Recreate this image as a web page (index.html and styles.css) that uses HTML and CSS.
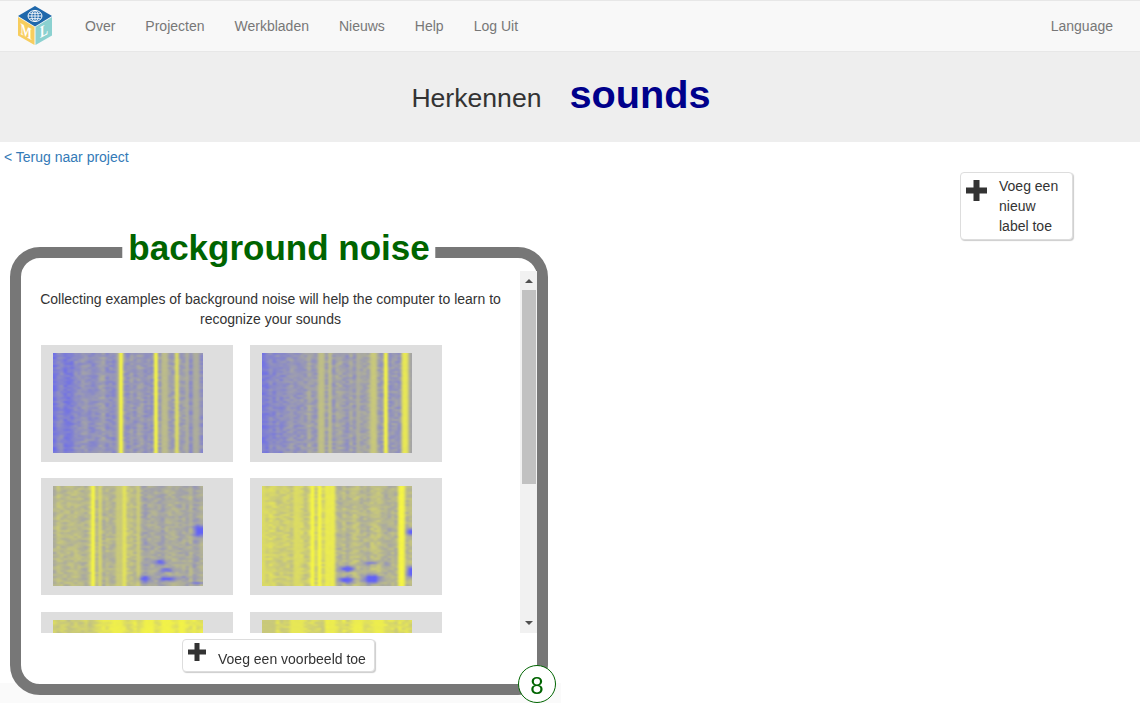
FILE: index.html
```html
<!DOCTYPE html>
<html lang="nl">
<head>
<meta charset="utf-8">
<title>Herkennen sounds</title>
<link rel="stylesheet" href="styles.css">
</head>
<body>
<nav class="navbar">
  <a class="brand" href="#">
    <svg class="logo" width="36" height="40" viewBox="0 0 36 40">
      <polygon points="18,0 35,10 18,20.5 1,10" fill="#1f68ab"/>
      <polygon points="1,11 17.5,21 17.5,39 1,29.5" fill="#f7cd5e"/>
      <polygon points="35,11 18.5,21 18.5,39 35,29.5" fill="#8bd1d0"/>
      <g fill="none" stroke="#fff" stroke-width=".9">
        <ellipse cx="18" cy="10" rx="7" ry="5.6"/>
        <ellipse cx="18" cy="10" rx="3.2" ry="5.6"/>
        <path d="M11 10h14M12.3 7.3h11.4M12.3 12.7h11.4M18 4.4v11.2"/>
      </g>
      <text class="logo-m" transform="matrix(.8 .42 0 1.1 3.5 28)">M</text>
      <text class="logo-l" transform="matrix(.8 -.42 0 1.1 23 32)">L</text>
    </svg>
  </a>
  <ul class="nav-links">
    <li><a href="#">Over</a></li>
    <li><a href="#">Projecten</a></li>
    <li><a href="#">Werkbladen</a></li>
    <li><a href="#">Nieuws</a></li>
    <li><a href="#">Help</a></li>
    <li><a href="#">Log Uit</a></li>
  </ul>
  <a class="language" href="#">Language</a>
</nav>

<header class="band">
  <span class="band-label">Herkennen</span>
  <span class="band-name">sounds</span>
</header>

<a class="back" href="#">&lt; Terug naar project</a>

<main class="workspace">
  <div class="label-col">
    <section class="card">
      <h2 class="card-title">background noise</h2>
      <div class="scroll-row">
        <div class="scroller">
          <p class="intro">Collecting examples of background noise will help the computer to learn to recognize your sounds</p>
          <div class="tiles">
            <div class="tile"><canvas width="150" height="100" data-spec="0"></canvas></div>
            <div class="tile"><canvas width="150" height="100" data-spec="1"></canvas></div>
            <div class="tile"><canvas width="150" height="100" data-spec="2"></canvas></div>
            <div class="tile"><canvas width="150" height="100" data-spec="3"></canvas></div>
            <div class="tile"><canvas width="150" height="100" data-spec="4"></canvas></div>
            <div class="tile"><canvas width="150" height="100" data-spec="5"></canvas></div>
            <div class="tile"><canvas width="150" height="100" data-spec="4"></canvas></div>
            <div class="tile"><canvas width="150" height="100" data-spec="5"></canvas></div>
          </div>
        </div>
        <div class="scrollbar">
          <span class="arrow arrow-up"></span>
          <span class="thumb"></span>
          <span class="arrow arrow-down"></span>
        </div>
      </div>
      <button class="btn btn-example" type="button">
        <svg class="plus plus-small" viewBox="0 0 18 18"><path d="M6.5 0h5v6.5H18v5h-6.5V18h-5v-6.5H0v-5h6.5z"/></svg>
        <span>Voeg een voorbeeld toe</span>
      </button>
      <span class="count">8</span>
    </section>
  </div>
  <button class="btn btn-label" type="button">
    <svg class="plus plus-large" viewBox="0 0 21 21"><path d="M7.5 0h6v7.5H21v6h-7.5V21h-6v-7.5H0v-6h7.5z"/></svg>
    <span class="btn-label-text">Voeg een nieuw label toe</span>
  </button>
</main>
<script src="script.js"></script>
</body>
</html>
```
FILE: styles.css
```css
* { box-sizing: border-box; }
html, body { height: 100%; overflow: hidden; }
body {
  margin: 0;
  background: #fff;
  color: #333;
  font: 14px/20px "Liberation Sans", Arial, sans-serif;
}
a { text-decoration: none; }

.navbar {
  display: flex;
  align-items: center;
  height: 52px;
  background: #f8f8f8;
  border-top: 1px solid #e7e7e7;
  border-bottom: 1px solid #e7e7e7;
}
.brand { display: block; margin-left: 17px; width: 53px; height: 40px; margin-top: -1px; }
.logo { display: block; }
.logo-m, .logo-l { font: bold 15px "Liberation Serif", serif; fill: #fff; }
.nav-links { display: flex; list-style: none; margin: 0; padding: 0; }
.nav-links a { display: block; padding: 0 15px; color: #777; }
.language { margin-left: auto; margin-right: 27px; color: #777; }

.band {
  display: flex;
  justify-content: center;
  align-items: flex-start;
  gap: 28px;
  height: 90px;
  padding: 17px 18px 0 0;
  background: #eee;
}
.band-label { margin-top: 4px; font-size: 26.6px; line-height: 50px; color: #333; }
.band-name { font-size: 39.7px; line-height: 50px; font-weight: bold; color: #00008b; }

.back { display: block; margin: 5px 0 0 4px; color: #337ab7; }

.workspace { display: flex; align-items: flex-start; }
.label-col {
  width: 561px;
  margin-top: 80px;
  padding: 0 13px 8px 10px;
  background: linear-gradient(to bottom, #fff 436px, #fafafa 436px);
}
.card {
  position: relative;
  display: flex;
  flex-direction: column;
  align-items: center;
  width: 538px;
  height: 448px;
  padding-top: 13px;
  background: #fff;
  border: 11px solid #777;
  border-radius: 30px;
}
.card-title {
  position: absolute;
  top: -30px;
  left: 50%;
  transform: translateX(-50%);
  margin: 0;
  padding: 0 6px;
  background: #fff;
  color: #006400;
  font-size: 35px;
  line-height: 40px;
  font-weight: bold;
  white-space: nowrap;
}
.scroll-row { display: flex; flex: none; width: 516px; height: 362px; }
.scroller { flex: 1; overflow: hidden; padding-top: 18px; }
.scrollbar {
  display: flex;
  flex-direction: column;
  align-items: center;
  flex: none;
  width: 17px;
  padding: 8px 0;
  background: #f1f1f1;
}
.arrow { flex: none; width: 0; height: 0; border-left: 4px solid transparent; border-right: 4px solid transparent; }
.arrow-up { border-bottom: 4px solid #505050; }
.arrow-down { border-top: 4px solid #505050; margin-top: auto; }
.thumb { flex: none; width: 14px; height: 194px; margin-top: 7px; background: #c1c1c1; }
.intro { margin: 0 0 15.6px; text-align: center; }
.tiles {
  display: grid;
  grid-template-columns: 192px 192px;
  column-gap: 17px;
  row-gap: 16.5px;
  padding-left: 20px;
}
.tile { height: 117px; padding: 8px 12px; background: #dedede; }
.tile canvas { display: block; width: 150px; height: 100px; }

.btn {
  display: flex;
  background: #fff;
  border: 1px solid #ddd;
  border-radius: 4px;
  box-shadow: 1px 1px 1px #ccc;
  color: #333;
  font: inherit;
  text-align: left;
  cursor: pointer;
}
.plus { display: block; flex: none; fill: #333; }
.btn-example {
  flex: none;
  align-items: flex-start;
  margin: 6px 1px 0 0;
  width: 193px;
  height: 33px;
  padding: 3px 0 0 5px;
}
.plus-small { width: 18px; height: 18px; }
.btn-example span { margin: 6px 0 0 12px; white-space: nowrap; }
.count {
  position: absolute;
  right: -19px;
  bottom: -19px;
  width: 38px;
  height: 38px;
  border: 1px solid #006400;
  border-radius: 50%;
  background: #fff;
  color: #006400;
  font-size: 24px;
  line-height: 40px;
  text-align: center;
}
.btn-label {
  margin: 5px 67px 0 auto;
  width: 113px;
  height: 68px;
  padding: 3px 0 0 5px;
}
.plus-large { width: 21px; height: 21px; margin-top: 4px; }
.btn-label-text { width: 70px; margin-left: 12px; }
```
FILE: script.js
```js
(function () {
  var specs = [
    { base: function (x) { return x < 45 ? 0.17 + x * 0.004 : 0.34; },
      stripes: [[66, 70, 1], [101, 104, 1], [122, 125, 0.82], [108, 110, 0.58], [111, 114, 0.58], [62, 64, 0.46], [133, 136, 0.5], [141, 144, 0.48]], blobs: [], noise: 0.15 },
    { base: function (x) { return x < 45 ? 0.17 + x * 0.005 : 0.4; },
      stripes: [[56, 62, 0.6], [66, 69, 0.6], [96, 98, 0.5], [108, 115, 0.66], [122, 126, 1], [140, 146, 0.85], [147, 150, 0.45]], blobs: [], noise: 0.15 },
    { base: function (x) { return x < 88 ? 0.58 : 0.47; },
      stripes: [[38, 42, 1], [45, 48, 0.76], [62, 70, 0.68], [70, 73, 0.86], [84, 87, 0.7]],
      blobs: [[92, 93, 6, 3, 0.4], [107, 76, 5, 2, 0.4], [115, 84, 6, 2, 0.35], [115, 93, 7, 2, 0.5], [147, 45, 5, 6, 0.5], [92, 56, 3, 1, 0.25], [130, 92, 6, 1, 0.25], [145, 97, 6, 1, 0.25]], noise: 0.15 },
    { base: function (x) { return x < 73 ? 0.72 : 0.58; },
      stripes: [[0, 2, 0.8], [32, 36, 0.8], [48, 52, 1], [55, 59, 1], [65, 73, 0.9], [136, 142, 0.95]],
      blobs: [[85, 83, 7, 2.5, 0.55], [85, 94, 7, 3, 0.6], [110, 93, 7, 4, 0.75], [110, 77, 7, 2, 0.35], [148, 46, 3, 3, 0.75], [148, 86, 3, 5, 0.6], [110, 34, 2, 1, 0.3], [128, 44, 3, 1, 0.25], [125, 78, 3, 1, 0.3]], noise: 0.15 },
    { base: function (x) { return x < 45 ? 0.7 : 0.84; },
      stripes: [[60, 68, 0.93], [92, 100, 0.95], [108, 116, 0.95], [125, 133, 0.95]], blobs: [], noise: 0.13 },
    { base: function () { return 0.8; },
      stripes: [[0, 14, 0.68], [30, 42, 0.88], [62, 72, 0.92], [90, 100, 0.92], [114, 122, 0.92]], blobs: [], noise: 0.15 }
  ];

  var seed = 12345;
  function rnd() {
    seed = (seed * 16807) % 2147483647;
    return seed / 2147483647;
  }

  var COLS = 43, ROWS = 50;
  function draw(canvas, spec) {
    var small = document.createElement('canvas');
    small.width = COLS;
    small.height = ROWS;
    var s = small.getContext('2d');
    var img = s.createImageData(COLS, ROWS);
    var colOffsets = [];
    for (var c = 0; c < COLS; c++) colOffsets.push((rnd() - 0.5) * 0.14);
    for (var r = 0; r < ROWS; r++) {
      for (var col = 0; col < COLS; col++) {
        var x = (col + 0.5) * 150 / COLS;
        var y = (r + 0.5) * 100 / ROWS;
        var t = spec.base(x) + colOffsets[col];
        var stripe = false;
        spec.stripes.forEach(function (st) {
          if (x >= st[0] - 0.9 && x <= st[1] + 0.9) { t = st[2]; stripe = true; }
        });
        t += (rnd() - 0.5) * spec.noise * (stripe ? 0.2 : 1);
        spec.blobs.forEach(function (b) {
          var dx = (x - b[0]) / b[2], dy = (y - b[1]) / b[3];
          t -= b[4] * Math.exp(-(dx * dx + dy * dy)) * 1.3;
        });
        t = Math.max(0, Math.min(1, t));
        var i = (r * COLS + col) * 4;
        img.data[i] = 100 + 148 * t;
        img.data[i + 1] = 100 + 148 * t;
        img.data[i + 2] = 245 - 181 * t;
        img.data[i + 3] = 255;
      }
    }
    s.putImageData(img, 0, 0);

    var ctx = canvas.getContext('2d');
    ctx.imageSmoothingEnabled = true;
    ctx.imageSmoothingQuality = 'high';
    ctx.drawImage(small, 0, 0, 150, 100);
  }

  document.querySelectorAll('canvas[data-spec]').forEach(function (canvas) {
    draw(canvas, specs[+canvas.getAttribute('data-spec')]);
  });
})();
```
